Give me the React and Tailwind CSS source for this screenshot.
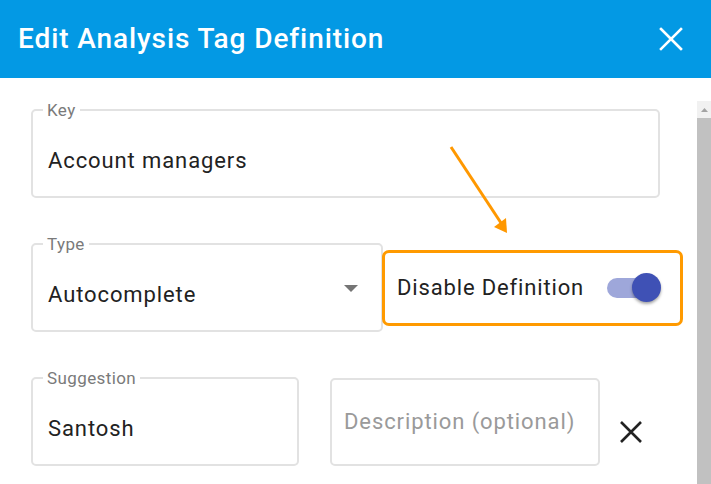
import { useState } from 'react';

function Campo({ etiqueta, valor, className = '', children }) {
  return (
    <fieldset className={`h-[97px] rounded-[5px] border-2 border-[#e2e2e2] pl-[15px] pr-4 ${className}`}>
      <legend className="ml-[-5px] px-[4px] text-[17px] leading-[18px] tracking-[0.4px] text-[#7a7a7a]">{etiqueta}</legend>
      <div className="flex items-center pt-[29px]">
        <span className="flex-1 text-[22px] leading-[26px] tracking-[0.9px] text-[#222]">{valor}</span>
        {children}
      </div>
    </fieldset>
  );
}

function App() {
  const [desactivado, setDesactivado] = useState(true);

  return (
    <div className="flex h-[484px] w-[711px] flex-col overflow-hidden bg-white font-['Roboto',sans-serif]">
      <header className="flex h-[78px] shrink-0 items-center justify-between bg-[#0399e4] pl-[18px] pr-[28px]">
        <h1 className="text-[28px] font-medium leading-8 tracking-[0.9px] text-white">Edit Analysis Tag Definition</h1>
        <svg className="size-[24px] text-white" viewBox="0 0 24 24" fill="none" stroke="currentColor" strokeWidth="2.6" strokeLinecap="square">
          <path d="M2 2 22 22M22 2 2 22" />
        </svg>
      </header>

      <div className="flex flex-1">
        <main className="relative flex-1 pl-[31px] pt-[23px]">
          <Campo etiqueta="Key" valor="Account managers" className="w-[629px]" />

          <div className="mt-[37px] flex">
            <Campo etiqueta="Type" valor="Autocomplete" className="w-[352px]">
              <svg className="mr-[7px] mt-[-14px] h-[7px] w-[14px] text-[#757575]" viewBox="0 0 14 7" fill="currentColor">
                <path d="M0 0h14L7 7z" />
              </svg>
            </Campo>
            <div className="ml-[-1px] mt-[15px] flex h-[76px] w-[301px] items-center justify-between rounded-[7px] border-[3px] border-[#ff9a00] pl-3 pr-[30px]">
              <span className="text-[22px] leading-6 tracking-[0.85px] text-[#222]">Disable Definition</span>
              <button
                type="button"
                onClick={() => setDesactivado(!desactivado)}
                className="relative h-[20px] w-[43px]"
              >
                <span className="absolute inset-0 rounded-full bg-[#9ea7da]" />
                <span className={`absolute top-[-5px] size-[29px] rounded-full bg-[#3f51b5] shadow-[0_2px_3px_rgba(0,0,0,0.35)] ${desactivado ? 'left-[25px]' : 'left-[-6px]'}`} />
              </button>
            </div>
          </div>

          <div className="mt-[37px] flex items-start">
            <Campo etiqueta="Suggestion" valor="Santosh" className="w-[268px]" />
            <div className="ml-[31px] mt-[9px] flex h-[88px] w-[270px] items-center rounded-[5px] border-2 border-[#e2e2e2] pl-3">
              <span className="text-[22px] leading-6 tracking-[0.9px] text-[#9a9a9a]">Description (optional)</span>
            </div>
            <svg className="ml-[20px] mt-[52px] size-[22px] text-[#222]" viewBox="0 0 22 22" fill="none" stroke="currentColor" strokeWidth="2.6">
              <path d="M1 1 21 21M21 1 1 21" />
            </svg>
          </div>

          {/* flecha naranja que apunta al interruptor */}
          <svg className="pointer-events-none absolute left-[440px] top-[60px]" width="80" height="100" viewBox="0 0 80 100" fill="none">
            <path d="M11 9 65 91" stroke="#ff9800" strokeWidth="3" />
            <path d="M54 89 67 95 66 80z" fill="#ff9800" />
          </svg>
        </main>

        <div className="mt-[23px] flex w-[14px] shrink-0 flex-col bg-[#f1f1f1]">
          <div className="flex h-[17px] items-center justify-center">
            <svg width="7" height="4" viewBox="0 0 7 4" fill="#a3a3a3"><path d="M0 4h7L3.5 0z" /></svg>
          </div>
          <div className="flex-1 bg-[#c1c1c1]" />
        </div>
      </div>
    </div>
  );
}

export default App;
